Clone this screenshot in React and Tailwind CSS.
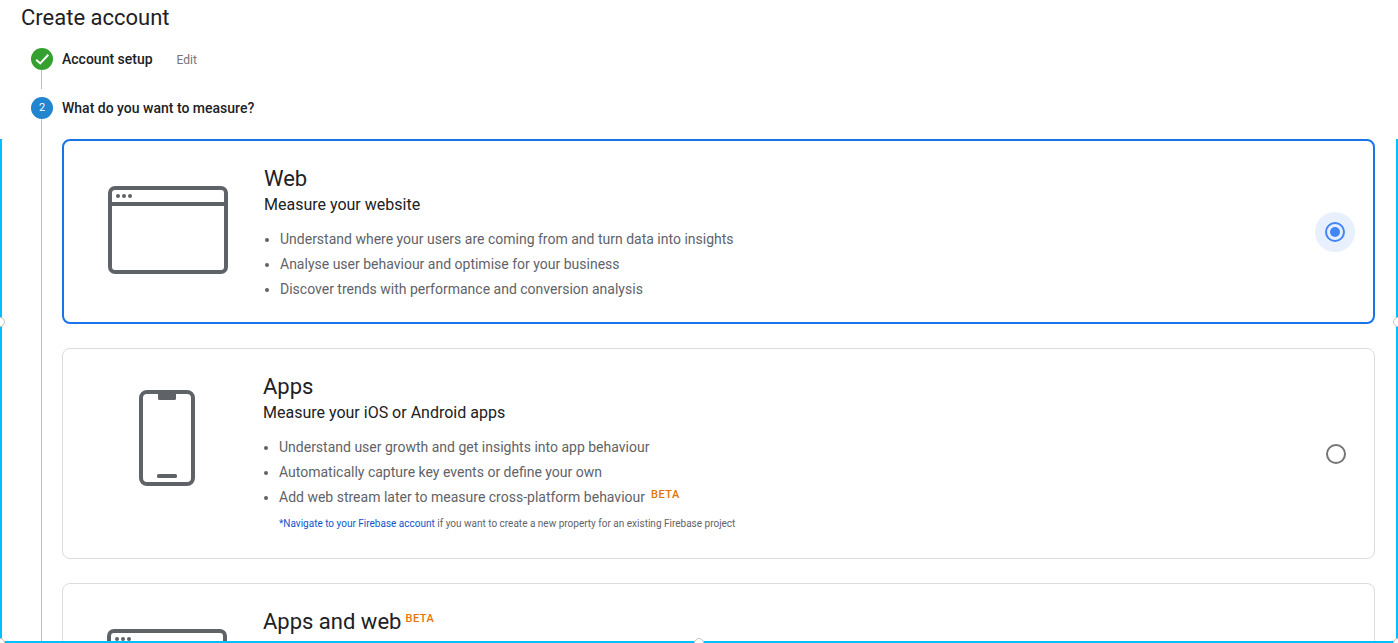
import { useState } from "react";

function BrowserIcon() {
  return (
    <svg width="120" height="88" viewBox="0 0 120 88" fill="none" aria-hidden="true">
      <rect x="2" y="2" width="116" height="84" rx="5" stroke="#5f6368" strokeWidth="4" />
      <path d="M3 18H117" stroke="#5f6368" strokeWidth="4" />
      <circle cx="10" cy="10" r="2" fill="#5f6368" />
      <circle cx="16" cy="10" r="2" fill="#5f6368" />
      <circle cx="22" cy="10" r="2" fill="#5f6368" />
    </svg>
  );
}

function PhoneIcon() {
  return (
    <svg width="56" height="96" viewBox="0 0 56 96" fill="none" aria-hidden="true">
      <rect x="2" y="2" width="52" height="92" rx="6" stroke="#5f6368" strokeWidth="4" />
      <path d="M19 2H37V8.500Q37 10 35.500 10H20.500Q19 10 19 8.500Z" fill="#5f6368" />
      <rect x="18" y="84" width="20" height="4" rx="1.500" fill="#5f6368" />
    </svg>
  );
}

function Beta() {
  return <span className="text-[11px] leading-4 font-medium tracking-wider text-[#e37400]">BETA</span>;
}

function OptionCard({ id, title, beta, subtitle, icon, bullets, note, selected, onSelect }) {
  return (
    <section
      className={
        selected
          ? "flex rounded-lg border-2 border-[#1a73e8] py-5 pr-[18px] pl-11"
          : "flex rounded-lg border border-[#dadce0] py-5 pr-[18px] pl-11"
      }
    >
      <div className="mt-1 mr-9 flex h-[130px] w-[120px] shrink-0 items-center justify-center">{icon}</div>
      <div className="min-w-0 flex-1 pt-1">
        <h2 className="flex gap-1 text-[22px] leading-7 text-[#202124]">
          {subtitle ? <label htmlFor={id}>{title}</label> : title}
          {beta && (
            <span className="flex pt-[3px]">
              <Beta />
            </span>
          )}
        </h2>
        {subtitle && <p className="text-base leading-6 text-[#202124]">{subtitle}</p>}
        {bullets && (
          <ul className="mt-[10px] list-disc pl-4 text-sm leading-[25px] text-[#5f6368]">
            {bullets.map((b) => (
              <li key={b.text}>
                <span className="inline-flex items-start gap-[6px] align-top">
                  {b.text}
                  {b.beta && (
                    <span className="flex pt-[2px]">
                      <Beta />
                    </span>
                  )}
                </span>
              </li>
            ))}
          </ul>
        )}
        {note}
      </div>
      {subtitle && (
        <span
          className={
            selected
              ? "flex size-10 shrink-0 items-center justify-center self-center rounded-full bg-[#e8f0fe]"
              : "flex size-10 shrink-0 items-center justify-center self-center rounded-full"
          }
        >
          <input
            type="radio"
            id={id}
            name="platform"
            checked={selected}
            onChange={onSelect}
            className="m-0 size-5 appearance-none rounded-full border-2 border-[#757575] bg-clip-content p-[3px] outline-none checked:border-[#4285f4] checked:bg-[#4285f4]"
          />
        </span>
      )}
    </section>
  );
}

function Handle({ place }) {
  return <span className={`absolute size-[10px] rounded-full border border-[#c4c4c4] bg-white ${place}`} />;
}

function SelectionFrame() {
  return (
    <div className="pointer-events-none absolute inset-0 overflow-hidden" aria-hidden="true">
      <div className="absolute inset-x-0 top-[139px] bottom-0 border-2 border-t-0 border-[#00bfff]" />
      <Handle place="top-1/2 left-0 -translate-x-1/2 -translate-y-1/2" />
      <Handle place="top-1/2 right-0 translate-x-1/2 -translate-y-1/2" />
      <Handle place="bottom-0 left-0 -translate-x-1/2 translate-y-1/2" />
      <Handle place="bottom-0 left-1/2 -translate-x-1/2 translate-y-1/2" />
      <Handle place="right-0 bottom-0 translate-x-1/2 translate-y-1/2" />
    </div>
  );
}

export default function App() {
  const [platform, setPlatform] = useState("web");

  return (
    <div className="relative flex h-screen flex-col overflow-hidden bg-white font-['Roboto',sans-serif] text-[#202124]">
      <h1 className="mb-4 px-[21px] pt-1 text-[22px] leading-7">Create account</h1>
      <ol className="flex flex-1 flex-col gap-2 pr-[23px] pl-[31px]">
        <li className="flex gap-[9px]">
          <div className="flex w-[22px] flex-col items-center">
            <span className="flex size-[22px] items-center justify-center rounded-full bg-[#34a030]">
              <svg width="22" height="22" viewBox="0 0 22 22" fill="none" aria-hidden="true">
                <path d="M5.200 11.800L9.200 15.400L17.300 6.700" stroke="white" strokeWidth="2" />
              </svg>
            </span>
            <span className="mr-px h-[19px] w-px bg-[#bdbdbd]" />
          </div>
          <div className="flex items-baseline gap-6">
            <h2 className="text-sm leading-[22px] font-medium">Account setup</h2>
            <button type="button" className="text-xs leading-[22px] text-[#757575]">Edit</button>
          </div>
        </li>
        <li className="flex flex-1 gap-[9px]">
          <div className="flex w-[22px] flex-col items-center">
            <span className="flex size-[22px] shrink-0 items-center justify-center rounded-full bg-[#2185d0] text-[11px] text-white">
              2
            </span>
            <span className="mr-px w-px flex-1 bg-[#bdbdbd]" />
          </div>
          <div className="min-w-0 flex-1">
            <h2 className="mb-5 text-sm leading-[22px] font-medium">What do you want to measure?</h2>
            <div className="flex flex-col gap-6">
              <OptionCard
                id="web"
                title="Web"
                subtitle="Measure your website"
                icon={<BrowserIcon />}
                bullets={[
                  { text: "Understand where your users are coming from and turn data into insights" },
                  { text: "Analyse user behaviour and optimise for your business" },
                  { text: "Discover trends with performance and conversion analysis" },
                ]}
                selected={platform === "web"}
                onSelect={() => setPlatform("web")}
              />
              <OptionCard
                id="apps"
                title="Apps"
                subtitle="Measure your iOS or Android apps"
                icon={<PhoneIcon />}
                bullets={[
                  { text: "Understand user growth and get insights into app behaviour" },
                  { text: "Automatically capture key events or define your own" },
                  { text: "Add web stream later to measure cross-platform behaviour", beta: true },
                ]}
                note={
                  <p className="my-1 pl-4 text-[10px] leading-5 text-[#5f6368]">
                    <a href="#firebase" className="text-[#1155cc]">*Navigate to your Firebase account</a> if you want to
                    create a new property for an existing Firebase project
                  </p>
                }
                selected={platform === "apps"}
                onSelect={() => setPlatform("apps")}
              />
              <OptionCard title="Apps and web" beta icon={<BrowserIcon />} />
            </div>
          </div>
        </li>
      </ol>
      <SelectionFrame />
    </div>
  );
}
